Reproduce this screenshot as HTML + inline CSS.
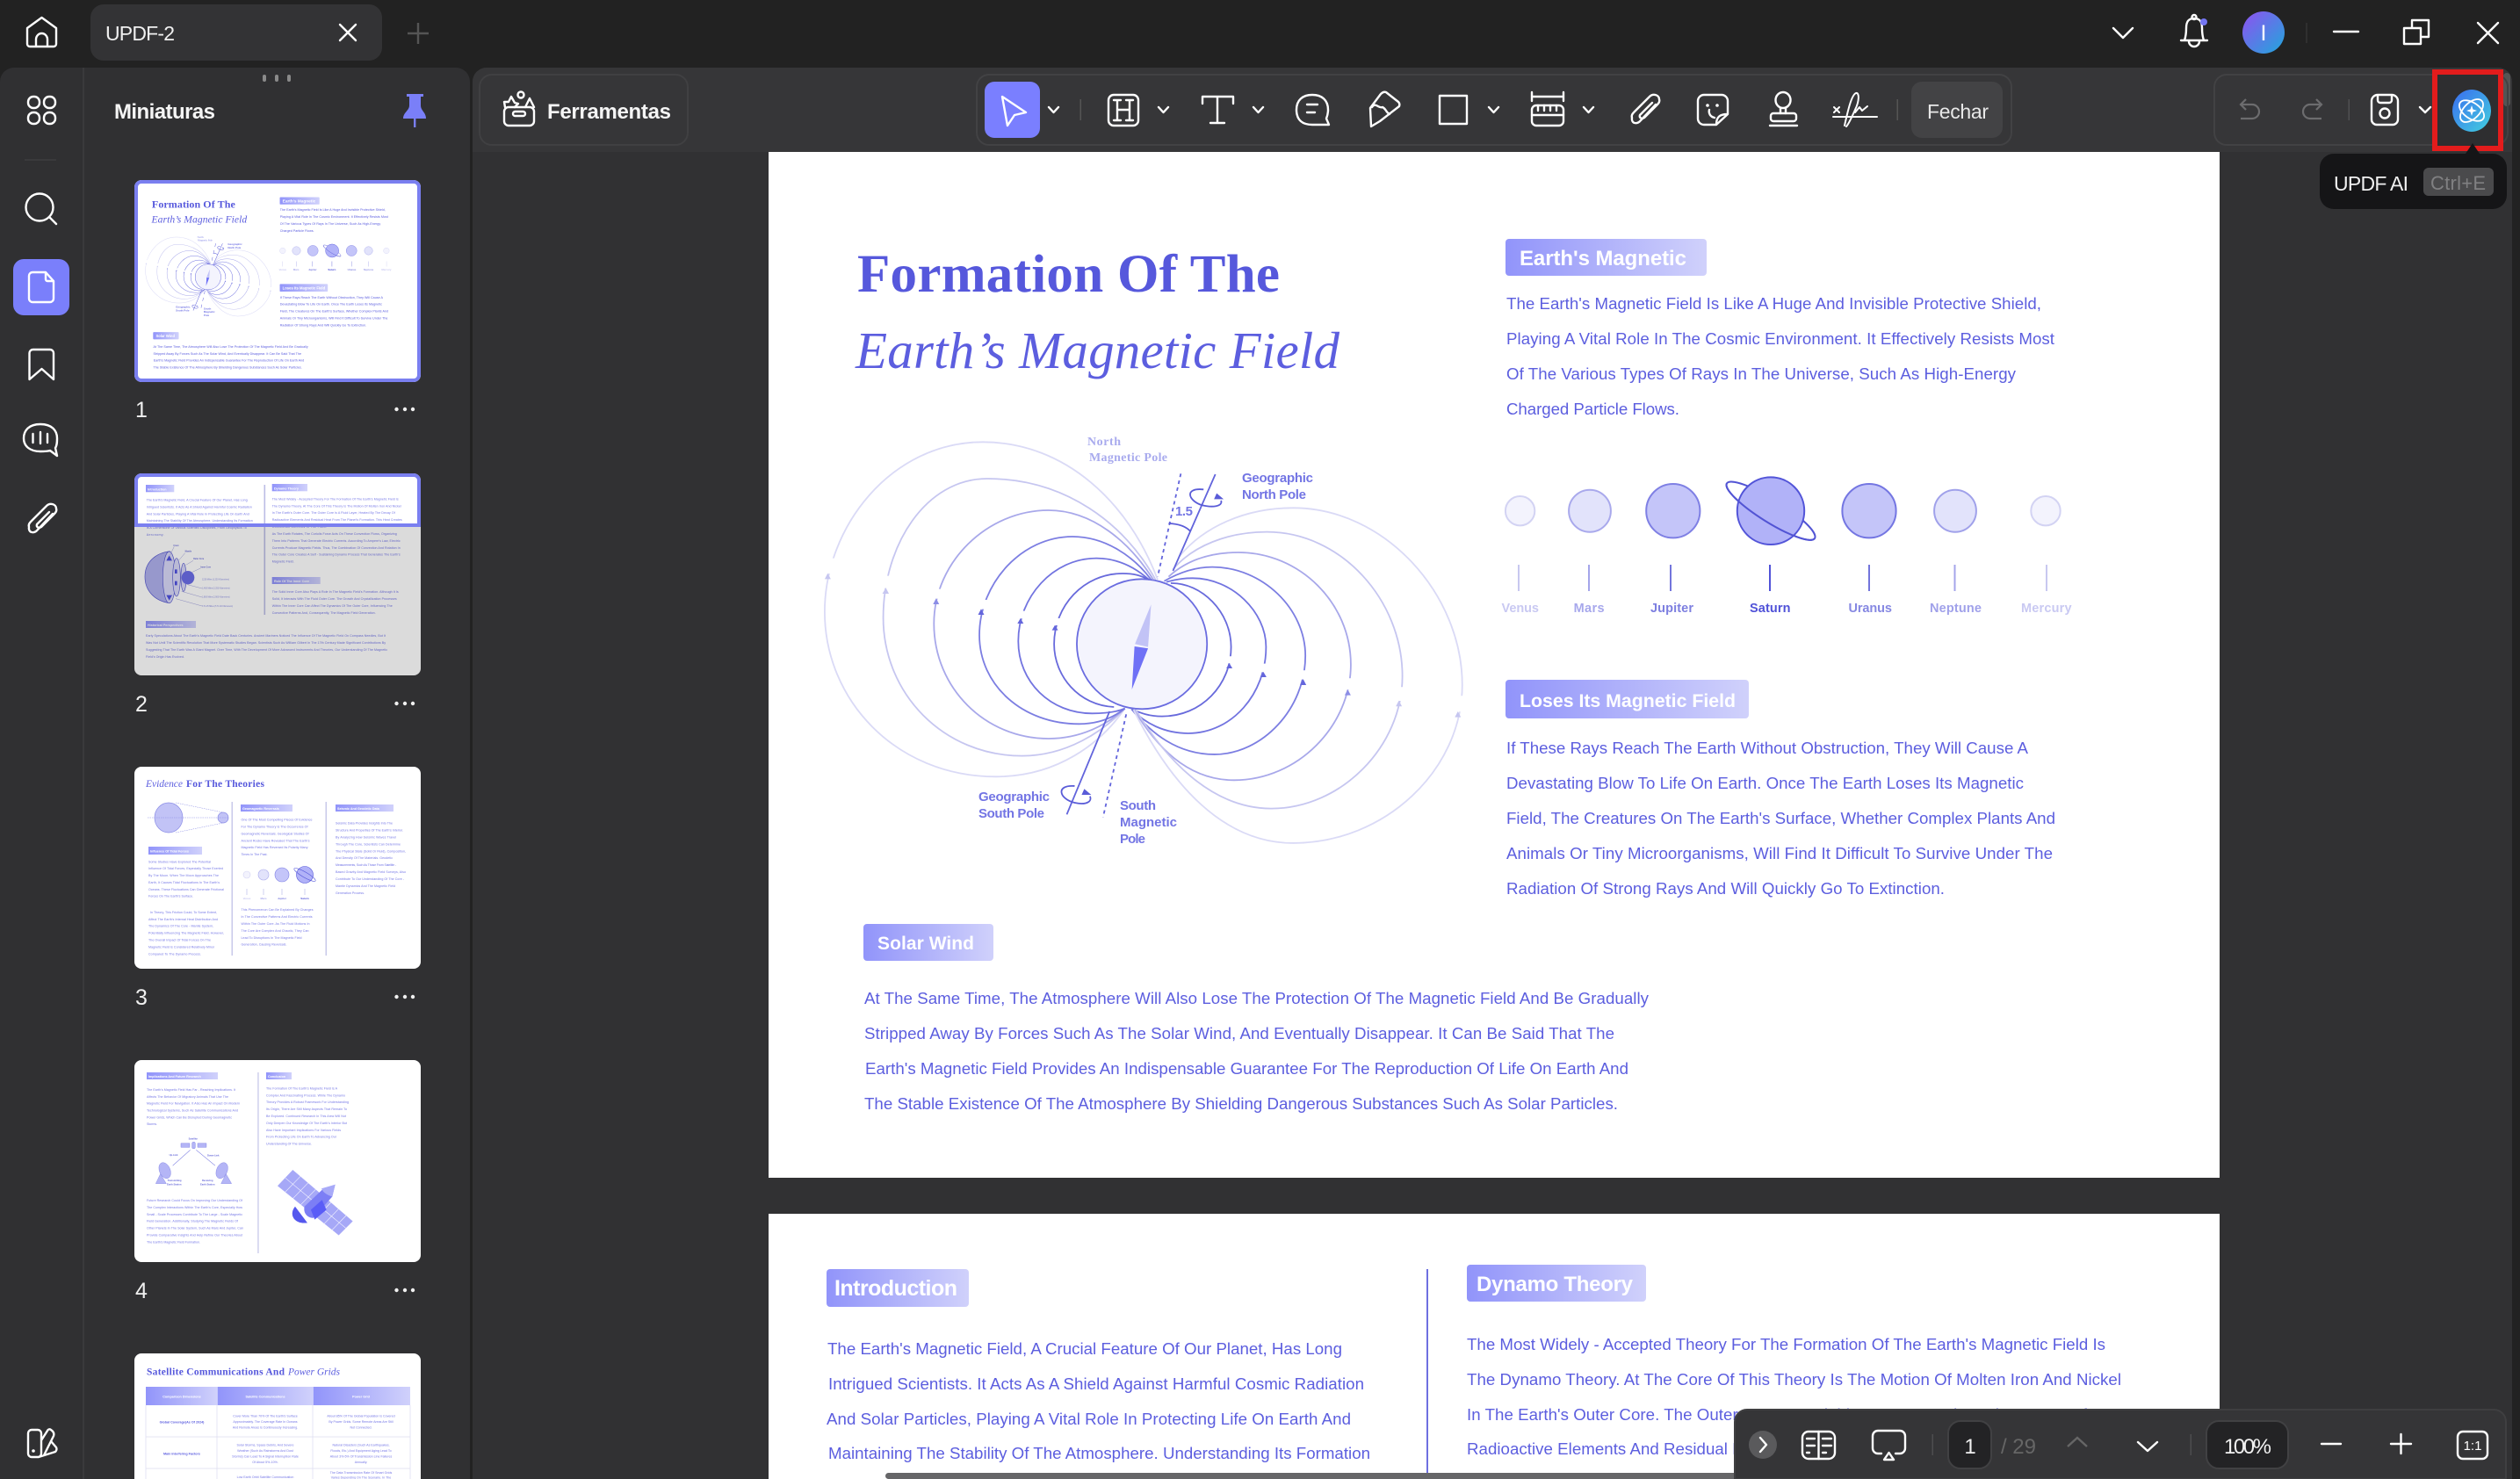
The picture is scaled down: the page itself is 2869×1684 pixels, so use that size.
<!DOCTYPE html>
<html lang="pt"><head><meta charset="utf-8"><title>UPDF-2</title>
<style>
html,body{margin:0;padding:0;background:#222;width:2869px;height:1684px;overflow:hidden}
svg{display:block}
text{font-family:"Liberation Sans",sans-serif}
.ui{fill:#f0f0f0}
.s{stroke:#fff;stroke-width:2.4;fill:none;stroke-linecap:round;stroke-linejoin:round}
.b{font-size:18.7px;fill:#5c5edf}
.pt{fill:#fff;font-weight:700}
.ser{font-family:"Liberation Serif",serif}
.l{font-weight:700;font-size:15px;fill:#7375e4}
.pn{font-weight:700;font-size:14.5px}
.t{font-size:3.6px;fill:#7577e6}
.th{font-size:3.7px;font-weight:700;fill:#fff}
.tb{font-size:3.7px;font-weight:700;fill:#5c5edf}
#dgm path,#dgm ellipse{vector-effect:non-scaling-stroke}
</style></head><body>
<svg width="2869" height="1684" viewBox="0 0 2869 1684" xmlns="http://www.w3.org/2000/svg">
<defs>
<linearGradient id="pg" x1="0" x2="1" y1="0" y2="0"><stop offset="0" stop-color="#9194fa"/><stop offset="1" stop-color="#d0d1fb"/></linearGradient>
<linearGradient id="av" x1="0" x2="1" y1="0" y2="1"><stop offset="0" stop-color="#9050f0"/><stop offset="1" stop-color="#1fa8dc"/></linearGradient>
<linearGradient id="ai" x1="0" x2="1" y1="0" y2="1"><stop offset="0" stop-color="#3b6cf0"/><stop offset="1" stop-color="#41d0de"/></linearGradient>
<clipPath id="c1"><rect x="153" y="205" width="326" height="230" rx="8"/></clipPath>
<clipPath id="c2"><rect x="153" y="539" width="326" height="230" rx="8"/></clipPath>
</defs>
<rect width="2869" height="1684" fill="#222"/>

<!-- left panel -->
<path d="M0,93a16,16 0 0 1 16,-16H519a16,16 0 0 1 16,16V1684H0Z" fill="#303032"/>
<rect x="94" y="77" width="2" height="1607" fill="#3a3a3c"/>
<!-- main panel -->
<path d="M538,93a16,16 0 0 1 16,-16H2844a16,16 0 0 1 16,16V1684H538Z" fill="#313133"/>
<path d="M538,93a16,16 0 0 1 16,-16H2844a16,16 0 0 1 16,16V173H538Z" fill="#363638"/>
<rect x="2850" y="83" width="8" height="38" rx="4" fill="#555"/>

<!-- title bar -->
<path class="s" d="M31,32L47.500,20L64,32V50a3,3 0 0 1 -3,3H34a3,3 0 0 1 -3,-3ZM41,53V45a6.500,7 0 0 1 13,0V53"/>
<rect x="103" y="5" width="332" height="64" rx="15" fill="#333335"/>
<text x="120" y="46" class="ui" font-size="23" textLength="79">UPDF-2</text>
<path class="s" d="M387,28L405,46M405,28L387,46"/>
<path d="M476,26V50M464,38H488" stroke="#555" stroke-width="2.400" fill="none"/>
<path class="s" d="M2406,32L2417,43L2428,32"/>
<path class="s" stroke-width="2" d="M2487,46C2489,40 2489,36 2489,32C2489,24 2492,21 2498,21C2504,21 2507,24 2507,32C2507,36 2507,40 2509,46M2483,46H2513M2492,47a6,6 0 0 0 12,0"/>
<circle class="s" cx="2498" cy="19.500" r="2.500"/>
<circle cx="2509" cy="25" r="4" fill="#7476f2"/>
<ellipse cx="2577" cy="37" rx="24" ry="24" fill="url(#av)"/>
<text x="2573.500" y="46" font-size="25" fill="#fff">I</text>
<rect x="2625.500" y="26" width="1" height="23" fill="#3c3c3c"/>
<path class="s" d="M2657,36H2685"/>
<path class="s" d="M2746,32V23H2765V42H2756M2737,32H2756V50H2737Z"/>
<path class="s" d="M2821,26L2844,49M2844,26L2821,49"/>

<!-- sidebar icons -->
<g class="s"><rect x="32" y="110" width="13" height="13" rx="6"/><rect x="50" y="110" width="13" height="13" rx="6"/><rect x="32" y="128" width="13" height="13" rx="6"/><rect x="50" y="128" width="13" height="13" rx="6"/></g>
<rect x="28" y="181" width="36" height="2" fill="#3a3a3c"/>
<circle class="s" cx="45" cy="236" r="15.500"/><path class="s" d="M56,247L64,255"/>
<rect x="15" y="295" width="64" height="64" rx="12" fill="#7a7ffb"/>
<path class="s" d="M37,310H52L61,320V340a4,4 0 0 1 -4,4H37a4,4 0 0 1 -4,-4V314a4,4 0 0 1 4,-4ZM52,310V318a2,2 0 0 0 2,2H61"/>
<path class="s" d="M33.500,402a4,4 0 0 1 4,-4H57a4,4 0 0 1 4,4V432L47.500,420L33.500,432Z"/>
<path class="s" d="M46,483C33,483 27,490 27,499C27,508 34,514 46,514C50,514 54,514 57,513L65,519L63,510C65,507 65,503 65,499C65,490 59,483 46,483ZM37.500,494V504M46,492V505M54,494V504"/>
<path class="s" id="clip1" d="M60,585L43,603C39,608 32,607 33,600C32,597 34,595 36,593L53,576C57,572 64,574 64,579C65,582 63,584 61,586L47,600C44,602 41,600 42,597L56,583"/>
<path class="s" d="M32,1632a4,4 0 0 1 4,-4h7a4,4 0 0 1 4,4V1655a4,4 0 0 1 -4,4H36a4,4 0 0 1 -4,-4ZM47,1640L54,1629C55,1627 57,1627 58,1628C61,1630 62,1632 61,1635L50,1657M58,1641L64,1648C65,1650 64,1652 63,1653L44,1659"/>
<circle cx="38" cy="1652" r="1.800" fill="#fff"/>

<!-- thumbs header -->
<rect x="299" y="85" width="4" height="8" rx="2" fill="#8a8a8a"/><rect x="313" y="85" width="4" height="8" rx="2" fill="#8a8a8a"/><rect x="327" y="85" width="4" height="8" rx="2" fill="#8a8a8a"/>
<text x="130" y="135" font-size="24" font-weight="700" fill="#f5f5f5" textLength="115">Miniaturas</text>
<path d="M463,107H482V110H479V120C479,126 485,128 485,135H459C459,128 466,126 466,120V110H463Z" fill="#7a7ff8"/><rect x="471" y="135" width="2.400" height="10" fill="#7a7ff8"/>

<!-- Ferramentas -->
<rect x="546" y="85" width="237" height="80" rx="14" fill="none" stroke="#404042" stroke-width="2"/>
<g class="s"><rect x="574" y="122" width="34" height="21" rx="5"/><rect x="584" y="127" width="14" height="5" rx="2.500"/><circle cx="593" cy="108" r="3.500"/><path d="M598,122L603,112L608,122M575,122L574,116L579,116L582,110L586,117L590,118L586,122"/></g>
<text x="623" y="135" font-size="24" font-weight="700" fill="#f5f5f5" textLength="141">Ferramentas</text>

<!-- PAGE 1 -->
<rect x="875" y="173" width="1652" height="1168" fill="#fff"/>
<text x="976" y="332" class="ser" font-size="61" font-weight="700" fill="#5658dc" textLength="481">Formation Of The</text>
<text x="974" y="419" class="ser" font-size="59" font-style="italic" fill="#5c5edf" textLength="551">Earth’s Magnetic Field</text>

<g stroke-width="1.800"><g id="dgm" transform="translate(920 470) scale(.4975 .3333)" fill="none">
<ellipse cx="764" cy="790" rx="149" ry="222" fill="#f4f4fd" stroke="#6a6ce0"/>
<path stroke="#dadaf6" d="M800,570C735,310 590,100 400,100C190,100 38,390 38,680C38,980 200,1243 430,1243C570,1243 670,1130 725,1010"/>
<path stroke="#c6c6f0" d="M795,570C725,380 590,225 410,225C270,225 172,450 172,700C172,960 310,1172 490,1172C590,1172 675,1090 725,1010"/>
<path stroke="#a8a8ea" d="M790,570C735,440 650,333 550,333C410,333 288,510 288,720C288,940 405,1113 550,1113C625,1113 685,1065 725,1010"/>
<path stroke="#7c7ee2" d="M785,570C745,490 680,423 605,423C490,423 392,580 392,760C392,930 490,1063 620,1063C665,1063 700,1040 725,1010"/>
<path stroke="#7274e0" d="M780,570C750,530 710,497 660,497C560,497 481,630 481,780C481,920 555,1027 650,1027C685,1027 710,1020 725,1010"/>
<path stroke="#686adc" d="M780,570C760,555 745,549 720,549C630,549 563,660 563,790C563,900 620,1000 700,1005"/>
<path stroke="#686adc" d="M830,582C900,580 968,680 968,800C968,930 900,1037 810,1037C780,1037 760,1025 740,1012"/>
<path stroke="#7274e0" d="M820,578C850,566 865,565 880,565C970,565 1048,680 1048,800C1048,960 970,1095 870,1095C815,1095 770,1060 740,1012"/>
<path stroke="#7c7ee2" d="M815,575C850,545 885,527 925,527C1040,527 1138,670 1138,830C1138,1010 1040,1167 930,1167C845,1167 785,1095 740,1012"/>
<path stroke="#a8a8ea" d="M825,560C865,505 920,477 985,477C1125,477 1242,650 1242,860C1242,1070 1120,1255 975,1255C865,1255 795,1135 745,1012"/>
<path stroke="#c6c6f0" d="M835,535C880,455 960,407 1050,407C1220,407 1360,640 1360,900C1360,1140 1220,1352 1060,1352C920,1352 815,1175 750,1015"/>
<path stroke="#dadaf6" d="M850,490C905,390 1000,325 1110,325C1320,325 1497,620 1497,930C1497,1220 1320,1470 1110,1470C950,1470 830,1270 745,1015"/>
<!-- gaps in the field lines, just before each arrowhead -->
<path fill="#fff" stroke="none" d="M30,497h40v52h-40zM160,557h40v42h-40zM280,602h40v33h-40zM385,639h40v32h-40zM475,677h40v26h-40zM555,702h30v24h-30zM950,832h30v24h-30zM1030,857h30v29h-30zM1120,880h30v31h-30zM1220,907h35v39h-35zM1340,937h35v47h-35zM1475,967h35v54h-35z"/>
<g stroke="none"><path fill="#c6c6f0" d="M45,548l-7,20h14zM178,598l-8,20h15zM1487,1020l-7,20h14zM1352,983l-7,20h14z"/><path fill="#8c8ee6" d="M293,634l-7,20h14zM1235,945l-7,20h14z"/><path fill="#6466dc" d="M396,670l-7,20h14zM486,702l-7,18h14zM565,725l-7,18h14zM964,855l-7,18h14zM1042,885l-7,18h14zM1133,910l-7,20h14z"/>
<path fill="#c2c3f6" d="M785,655L748,790L778,800Z"/><path fill="#6f71f6" d="M747,798L778,805L741,945Z"/></g>
<path stroke="#6264dc" d="M932,210L835,540M690,1020L592,1372"/>
<path stroke="#6264dc" stroke-dasharray="4 4" d="M853,208L800,560M728,1030L675,1382"/>
<path stroke="#5a5cd8" d="M825,378Q860,380 875,405"/>
<path stroke="#5a5cd8" d="M905,262C860,255 870,300 900,315C925,325 950,320 945,300M610,1275C565,1270 575,1320 610,1332C640,1342 650,1325 645,1310"/>
<path fill="#5a5cd8" stroke="none" d="M935,275l16,20l-22,0zM632,1285l16,20l-22,0z"/>
</g></g>
<text x="1238" y="507" class="ser" font-size="14" font-weight="700" fill="#a9abee" textLength="38">North</text>
<text x="1240" y="525" class="ser" font-size="14" font-weight="700" fill="#a9abee" textLength="89">Magnetic Pole</text>
<text x="1414" y="549" class="l" textLength="81">Geographic</text>
<text x="1414" y="568" class="l" textLength="73">North Pole</text>
<text x="1338" y="587" class="l" font-size="17" textLength="20">1.5</text>
<text x="1114" y="912" class="l" textLength="81">Geographic</text>
<text x="1114" y="931" class="l" textLength="75">South Pole</text>
<text x="1275" y="922" class="l" textLength="41">South</text>
<text x="1275" y="941" class="l" textLength="65">Magnetic</text>
<text x="1275" y="960" class="l" textLength="29">Pole</text>

<rect x="1714" y="272" width="229" height="42" rx="4" fill="url(#pg)"/>
<text x="1730" y="302" class="pt" font-size="24" textLength="190">Earth's Magnetic</text>
<text x="1715" y="352" class="b" textLength="609">The Earth's Magnetic Field Is Like A Huge And Invisible Protective Shield,</text>
<text x="1715" y="392" class="b" textLength="624">Playing A Vital Role In The Cosmic Environment. It Effectively Resists Most</text>
<text x="1715" y="432" class="b" textLength="580">Of The Various Types Of Rays In The Universe, Such As High-Energy</text>
<text x="1715" y="472" class="b" textLength="197">Charged Particle Flows.</text>

<g id="pl" stroke-width="2">
<ellipse cx="2016" cy="581.700" rx="59" ry="13" transform="rotate(32 2016 581.700)" fill="none" stroke="#5254d4"/>
<ellipse cx="1730.600" cy="581.700" rx="16.700" ry="16.700" fill="#f3f3fd" stroke="#d3d3f3"/>
<ellipse cx="1810" cy="581.700" rx="23.900" ry="24" fill="#e2e3fb" stroke="#a9a9ec"/>
<ellipse cx="1904.800" cy="581.700" rx="30.600" ry="30.700" fill="#c4c5f9" stroke="#7f80e4"/>
<ellipse cx="2016" cy="581.700" rx="38.200" ry="38.300" fill="#b1b2f8" stroke="#5254d8"/>
<path d="M-59,0A59,13 0 0 0 59,0" transform="translate(2016 581.700) rotate(32)" fill="none" stroke="#5254d4"/>
<ellipse cx="2128" cy="581.700" rx="30.600" ry="30.700" fill="#c4c5f9" stroke="#7476e2"/>
<ellipse cx="2226" cy="581.700" rx="23.900" ry="24" fill="#e2e3fb" stroke="#a0a1ea"/>
<ellipse cx="2329" cy="581.700" rx="16.700" ry="16.700" fill="#f3f3fd" stroke="#d3d3f3"/>
<path stroke="#c8c8f0" d="M1729,643V673M2330,643V673"/><path stroke="#a4a5ea" d="M1809,643V673M2225.500,643V673"/><path stroke="#7375dc" d="M1902,643V673M2128,643V673"/><path stroke="#5052d8" d="M2015,643V673"/>
</g>
<text x="1709.500" y="697" class="pn" fill="#c9c9f2" textLength="42.500">Venus</text>
<text x="1791.600" y="697" class="pn" fill="#a7a8ec" textLength="35">Mars</text>
<text x="1879" y="697" class="pn" fill="#7d7fe0" textLength="49">Jupiter</text>
<text x="1992" y="697" class="pn" fill="#5052d8" textLength="46.500">Saturn</text>
<text x="2104.500" y="697" class="pn" fill="#8688e2" textLength="49.500">Uranus</text>
<text x="2197" y="697" class="pn" fill="#a0a1ea" textLength="59">Neptune</text>
<text x="2301" y="697" class="pn" fill="#c9c9f2" textLength="57.600">Mercury</text>

<rect x="1714" y="774" width="277" height="44" rx="4" fill="url(#pg)"/>
<text x="1730" y="805" class="pt" font-size="21.300" textLength="246">Loses Its Magnetic Field</text>
<text x="1715" y="858" class="b" textLength="594">If These Rays Reach The Earth Without Obstruction, They Will Cause A</text>
<text x="1715" y="898" class="b" textLength="589">Devastating Blow To Life On Earth. Once The Earth Loses Its Magnetic</text>
<text x="1715" y="938" class="b" textLength="625">Field, The Creatures On The Earth's Surface, Whether Complex Plants And</text>
<text x="1715" y="978" class="b" textLength="622">Animals Or Tiny Microorganisms, Will Find It Difficult To Survive Under The</text>
<text x="1715" y="1018" class="b" textLength="499">Radiation Of Strong Rays And Will Quickly Go To Extinction.</text>

<rect x="983" y="1052" width="148" height="42" rx="4" fill="url(#pg)"/>
<text x="999" y="1081" class="pt" font-size="21" textLength="110">Solar Wind</text>
<text x="984" y="1143" class="b" textLength="893">At The Same Time, The Atmosphere Will Also Lose The Protection Of The Magnetic Field And Be Gradually</text>
<text x="984" y="1183" class="b" textLength="854">Stripped Away By Forces Such As The Solar Wind, And Eventually Disappear. It Can Be Said That The</text>
<text x="985" y="1223" class="b" textLength="869">Earth's Magnetic Field Provides An Indispensable Guarantee For The Reproduction Of Life On Earth And</text>
<text x="984" y="1263" class="b" textLength="858">The Stable Existence Of The Atmosphere By Shielding Dangerous Substances Such As Solar Particles.</text>

<!-- PAGE 2 -->
<rect x="875" y="1382" width="1652" height="302" fill="#fff"/>
<rect x="941" y="1445" width="162" height="43" rx="4" fill="url(#pg)"/>
<text x="950" y="1475" class="pt" font-size="25" textLength="140">Introduction</text>
<rect x="1624" y="1445" width="2" height="240" fill="#6e70e0"/>
<rect x="1670" y="1440" width="204" height="42" rx="4" fill="url(#pg)"/>
<text x="1681" y="1470" class="pt" font-size="24" textLength="178">Dynamo Theory</text>
<text x="942" y="1542" class="b" textLength="586">The Earth's Magnetic Field, A Crucial Feature Of Our Planet, Has Long</text>
<text x="943" y="1582" class="b" textLength="610">Intrigued Scientists. It Acts As A Shield Against Harmful Cosmic Radiation</text>
<text x="941" y="1622" class="b" textLength="597">And Solar Particles, Playing A Vital Role In Protecting Life On Earth And</text>
<text x="943" y="1661" class="b" textLength="617">Maintaining The Stability Of The Atmosphere. Understanding Its Formation</text>
<text x="1670" y="1537" class="b" textLength="727">The Most Widely - Accepted Theory For The Formation Of The Earth's Magnetic Field Is</text>
<text x="1670" y="1577" class="b" textLength="745">The Dynamo Theory. At The Core Of This Theory Is The Motion Of Molten Iron And Nickel</text>
<text x="1670" y="1617" class="b" textLength="706">In The Earth's Outer Core. The Outer Core Is A Fluid Layer, Heated By The Decay Of</text>
<text x="1670" y="1656" class="b" textLength="750">Radioactive Elements And Residual Heat From The Planet's Formation. This Heat Creates</text>
<rect x="1008" y="1677" width="1100" height="7" rx="3.500" fill="#666668"/>

<!-- toolbar -->
<rect x="1112" y="85" width="1178" height="80" rx="14" fill="none" stroke="#424244" stroke-width="2"/>
<rect x="1121" y="93" width="63" height="64" rx="11" fill="#7a7fff"/>
<path class="s" d="M1141,110L1168,128L1155,131L1147,143Z"/>
<g class="s" stroke-width="2">
<path d="M1194,122l5.500,6l5.500,-6M1319,122l5.500,6l5.500,-6M1427,122l5.500,6l5.500,-6M1695,122l5.500,6l5.500,-6M1803,122l5.500,6l5.500,-6"/>
</g>
<rect x="1229.500" y="113" width="1.500" height="24" fill="#555"/>
<g class="s">
<rect x="1262" y="108" width="34" height="35" rx="6"/>
<path d="M1272,114V137M1286,114V137M1268,114H1276M1282,114H1290M1268,137H1276M1282,137H1290M1272,125H1286"/>
<path d="M1369,118V110H1404V118M1386,110V140M1378,140H1394"/>
<path d="M1494,108C1483,108 1476,114 1476,125C1476,137 1483,142 1494,142H1513L1510,135C1512,130 1512,127 1512,125C1512,114 1505,108 1494,108ZM1488,119H1500M1488,128H1497"/>
<path d="M1572,107Q1575,104 1578,105L1592,116Q1594,118 1593,121L1571,138L1561,144L1560,123ZM1562,122C1566,116 1570,124 1574,122C1578,124 1578,128 1582,130"/>
<rect x="1639" y="109" width="31" height="32"/>
<path d="M1744,105V115M1780,105V115M1744,110H1780M1744,131H1780M1751,120v6M1758,120v6M1765,120v6M1772,120v6"/>
<rect x="1744" y="120" width="36" height="23" rx="5"/>
<path transform="translate(1825 -466)" d="M60,585L43,603C39,608 32,607 33,600C32,597 34,595 36,593L53,576C57,572 64,574 64,579C65,582 63,584 61,586L47,600C44,602 41,600 42,597L56,583"/>
<path d="M1940,108H1960a7,7 0 0 1 7,7V130L1954,142H1940a7,7 0 0 1 -7,-7V115a7,7 0 0 1 7,-7ZM1954,142C1954,133 1958,130 1967,130M1946,125C1945,129 1947,133 1952,134"/>
<ellipse cx="2030" cy="114" rx="8.500" ry="9"/>
<path d="M2027,123V129M2033,123V129M2015,143H2046"/>
<rect x="2016" y="129" width="29" height="9" rx="3"/>
<path stroke-width="2" d="M2087,133H2137M2100,143C2104,125 2108,108 2113,106C2117,105 2117,115 2112,125C2108,134 2104,142 2102,144M2112,128L2117,122L2120,126L2126,121M2088,122L2094,128M2094,122L2088,128"/>
</g>
<circle cx="1944" cy="120" r="1.800" fill="#fff"/><circle cx="1955" cy="120" r="1.800" fill="#fff"/>
<rect x="2159.500" y="113" width="1.500" height="24" fill="#555"/>
<rect x="2176" y="93" width="104" height="64" rx="12" fill="#434345"/>
<text x="2194" y="135" font-size="23" fill="#e8e8e8" textLength="70">Fechar</text>

<!-- right group -->
<rect x="2521" y="85" width="334" height="80" rx="14" fill="none" stroke="#424244" stroke-width="2"/>
<path d="M2557,113L2551,119L2557,125M2551,119H2564a8,8 0 0 1 0,16H2551M2637,113L2643,119L2637,125M2643,119H2630a8,8 0 0 0 0,16H2643" fill="none" stroke="#6c6c6e" stroke-width="2.200"/>
<rect x="2673.500" y="113" width="1.500" height="24" fill="#505052"/>
<path class="s" d="M2707,108H2723a7,7 0 0 1 7,7V136a6,6 0 0 1 -6,6H2706a6,6 0 0 1 -6,-6V115a7,7 0 0 1 7,-7ZM2707,108V114a3,3 0 0 0 3,3H2720a3,3 0 0 0 3,-3V108"/>
<circle class="s" cx="2715" cy="129" r="5.500"/>
<path class="s" d="M2755,122l6,6l6,-6"/>
<rect x="2772" y="82" width="75" height="87" fill="#2e2e30"/>
<rect x="2772" y="82" width="75" height="87" fill="none" stroke="#e31c1c" stroke-width="6"/>
<ellipse cx="2814" cy="126" rx="22" ry="24" fill="url(#ai)"/>
<g fill="none" stroke="#fff" stroke-width="1.800"><ellipse cx="2814" cy="126" rx="16" ry="9" transform="rotate(35 2814 126)"/><ellipse cx="2814" cy="126" rx="16" ry="9" transform="rotate(-45 2814 126)"/></g>
<path d="M2814,120l1.500,4.500l4.500,1.500l-4.500,1.500l-1.500,4.500l-1.500,-4.500l-4.500,-1.500l4.500,-1.500z" fill="#fff"/>
<path d="M2807,175L2815,163L2823,175Z" fill="#151517"/>
<rect x="2641" y="175" width="213" height="63" rx="16" fill="#151517"/>
<text x="2657" y="217" font-size="23" fill="#f0f0f0" textLength="85">UPDF AI</text>
<rect x="2759" y="191" width="80" height="32" rx="6" fill="#4a4a4c"/>
<text x="2767" y="216" font-size="22" fill="#808082" textLength="63">Ctrl+E</text>

<!-- thumbnail 1 -->
<g clip-path="url(#c1)"><rect x="153" y="205" width="326" height="230" fill="#fff"/>
<g transform="translate(153 205) scale(.1973 .1969) translate(-875 -173)">
<text x="976" y="332" class="ser" font-size="61" font-weight="700" fill="#5658dc" textLength="481">Formation Of The</text>
<text x="974" y="419" class="ser" font-size="59" font-style="italic" fill="#5c5edf" textLength="551">Earth’s Magnetic Field</text>
<g stroke-width=".5"><use href="#dgm"/></g>
<use href="#pl"/>
<text x="1238" y="507" class="ser" font-size="14" font-weight="700" fill="#a9abee">North</text><text x="1240" y="525" class="ser" font-size="14" font-weight="700" fill="#a9abee">Magnetic Pole</text>
<text x="1414" y="549" class="l">Geographic</text><text x="1414" y="568" class="l">North Pole</text>
<text x="1114" y="912" class="l">Geographic</text><text x="1114" y="931" class="l">South Pole</text>
<text x="1275" y="922" class="l">South</text><text x="1275" y="941" class="l">Magnetic</text><text x="1275" y="960" class="l">Pole</text>
<rect x="1714" y="272" width="229" height="42" rx="4" fill="url(#pg)"/><text x="1730" y="302" class="pt" font-size="24">Earth's Magnetic</text>
<text x="1715" y="352" class="b" textLength="609">The Earth's Magnetic Field Is Like A Huge And Invisible Protective Shield,</text>
<text x="1715" y="392" class="b" textLength="624">Playing A Vital Role In The Cosmic Environment. It Effectively Resists Most</text>
<text x="1715" y="432" class="b" textLength="580">Of The Various Types Of Rays In The Universe, Such As High-Energy</text>
<text x="1715" y="472" class="b" textLength="197">Charged Particle Flows.</text>
<text x="1709.500" y="697" class="pn" fill="#c9c9f2">Venus</text><text x="1791.600" y="697" class="pn" fill="#a7a8ec">Mars</text><text x="1879" y="697" class="pn" fill="#7d7fe0">Jupiter</text><text x="1992" y="697" class="pn" fill="#5052d8">Saturn</text><text x="2104.500" y="697" class="pn" fill="#8688e2">Uranus</text><text x="2197" y="697" class="pn" fill="#a0a1ea">Neptune</text><text x="2301" y="697" class="pn" fill="#c9c9f2">Mercury</text>
<rect x="1714" y="774" width="277" height="44" rx="4" fill="url(#pg)"/><text x="1730" y="805" class="pt" font-size="21.300">Loses Its Magnetic Field</text>
<text x="1715" y="858" class="b" textLength="594">If These Rays Reach The Earth Without Obstruction, They Will Cause A</text>
<text x="1715" y="898" class="b" textLength="589">Devastating Blow To Life On Earth. Once The Earth Loses Its Magnetic</text>
<text x="1715" y="938" class="b" textLength="625">Field, The Creatures On The Earth's Surface, Whether Complex Plants And</text>
<text x="1715" y="978" class="b" textLength="622">Animals Or Tiny Microorganisms, Will Find It Difficult To Survive Under The</text>
<text x="1715" y="1018" class="b" textLength="499">Radiation Of Strong Rays And Will Quickly Go To Extinction.</text>
<rect x="983" y="1052" width="148" height="42" rx="4" fill="url(#pg)"/><text x="999" y="1081" class="pt" font-size="21">Solar Wind</text>
<text x="984" y="1143" class="b" textLength="893">At The Same Time, The Atmosphere Will Also Lose The Protection Of The Magnetic Field And Be Gradually</text>
<text x="984" y="1183" class="b" textLength="854">Stripped Away By Forces Such As The Solar Wind, And Eventually Disappear. It Can Be Said That The</text>
<text x="985" y="1223" class="b" textLength="869">Earth's Magnetic Field Provides An Indispensable Guarantee For The Reproduction Of Life On Earth And</text>
<text x="984" y="1263" class="b" textLength="858">The Stable Existence Of The Atmosphere By Shielding Dangerous Substances Such As Solar Particles.</text>
</g></g>
<rect x="155" y="207" width="322" height="226" rx="6" fill="none" stroke="#7a7ff0" stroke-width="4"/>
<text x="154" y="475" font-size="25" class="ui">1</text>
<g fill="#f0f0f0"><circle cx="451.500" cy="466" r="2.200"/><circle cx="461" cy="466" r="2.200"/><circle cx="470" cy="466" r="2.200"/></g>

<!-- thumbnail 2 -->
<g clip-path="url(#c2)"><rect x="153" y="539" width="326" height="230" fill="#fff"/>
<rect x="166" y="552" width="32.300" height="8.300" fill="url(#pg)"/><text x="168" y="558.500" class="th">Introduction</text>
<rect x="309.700" y="551" width="40.300" height="8.300" fill="url(#pg)"/><text x="312" y="557.500" class="th">Dynamo Theory</text>
<rect x="300.500" y="552" width="1.600" height="148" fill="#bcbde6"/>
<text x="166.700" y="570.500" class="t" textLength="115">The Earth's Magnetic Field, A Crucial Feature Of Our Planet, Has Long</text>
<text x="166.700" y="578.500" class="t" textLength="120">Intrigued Scientists. It Acts As A Shield Against Harmful Cosmic Radiation</text>
<text x="166.700" y="586.500" class="t" textLength="117">And Solar Particles, Playing A Vital Role In Protecting Life On Earth And</text>
<text x="166.700" y="594.200" class="t" textLength="121">Maintaining The Stability Of The Atmosphere. Understanding Its Formation</text>
<text x="166.700" y="602.200" class="t" textLength="114">Is A Cornerstone Of Various Scientific Disciplines, From Geophysics To</text>
<text x="166.700" y="609.900" class="t" textLength="20">Aeronomy.</text>
<text x="309.700" y="569.500" class="t" textLength="144">The Most Widely - Accepted Theory For The Formation Of The Earth's Magnetic Field Is</text>
<text x="309.700" y="577.500" class="t" textLength="147">The Dynamo Theory. At The Core Of This Theory Is The Motion Of Molten Iron And Nickel</text>
<text x="309.700" y="585.200" class="t" textLength="140">In The Earth's Outer Core. The Outer Core Is A Fluid Layer, Heated By The Decay Of</text>
<text x="309.700" y="593.200" class="t" textLength="148">Radioactive Elements And Residual Heat From The Planet's Formation. This Heat Creates</text>
<text x="309.700" y="600.900" class="t" textLength="62">Convection Currents In The Fluid.</text>
<text x="309.700" y="608.900" class="t" textLength="142">As The Earth Rotates, The Coriolis Force Acts On These Convection Flows, Organizing</text>
<text x="309.700" y="616.900" class="t" textLength="146">Them Into Patterns That Generate Electric Currents. According To Ampere's Law, Electric</text>
<text x="309.700" y="624.900" class="t" textLength="146">Currents Produce Magnetic Fields. Thus, The Combination Of Convection And Rotation In</text>
<text x="309.700" y="632.500" class="t" textLength="146">The Outer Core Creates A Self - Sustaining Dynamo Process That Generates The Earth's</text>
<text x="309.700" y="640.500" class="t" textLength="25">Magnetic Field.</text>
<rect x="309.700" y="657" width="55" height="8" fill="url(#pg)"/><text x="312" y="663" class="th">Role Of The Inner Core</text>
<text x="309.700" y="675.200" class="t" textLength="144">The Solid Inner Core Also Plays A Role In The Magnetic Field's Formation. Although It Is</text>
<text x="309.700" y="683.200" class="t" textLength="142">Solid, It Interacts With The Fluid Outer Core. The Growth And Crystallization Processes</text>
<text x="309.700" y="691.200" class="t" textLength="137">Within The Inner Core Can Affect The Dynamics Of The Outer Core, Influencing The</text>
<text x="309.700" y="699.200" class="t" textLength="118">Convective Patterns And, Consequently, The Magnetic Field Generation.</text>
<rect x="166" y="707" width="57" height="8" fill="url(#pg)"/><text x="168" y="713" class="th">Historical Perspectives</text>
<text x="166" y="725.200" class="t" textLength="273">Early Speculations About The Earth's Magnetic Field Date Back Centuries. Ancient Mariners Noticed The Influence Of The Magnetic Field On Compass Needles, But It</text>
<text x="166" y="733.200" class="t" textLength="273">Was Not Until The Scientific Revolution That More Systematic Studies Began. Scientists Such As William Gilbert In The 17th Century Made Significant Contributions By</text>
<text x="166" y="740.900" class="t" textLength="275">Suggesting That The Earth Was A Giant Magnet. Over Time, With The Development Of More Advanced Instruments And Theories, Our Understanding Of The Magnetic</text>
<text x="166" y="748.900" class="t" textLength="44">Field's Origin Has Evolved.</text>
<g transform="translate(150 535) scale(.3333)">
<path d="M130,278C75,285 45,320 45,365C45,410 75,448 130,455Z" fill="#b0b2ee" stroke="#5557d0" stroke-width="2"/>
<ellipse cx="128" cy="367" rx="22" ry="88" fill="#d9d9f9" stroke="#5557d0" stroke-width="2"/>
<ellipse cx="153" cy="367" rx="13" ry="65" fill="#d9d9f9" stroke="#5557d0" stroke-width="2"/>
<ellipse cx="177" cy="367" rx="9" ry="48" fill="#d9d9f9" stroke="#5557d0" stroke-width="2"/>
<path d="M118,310L128,292L138,310ZM118,428L128,446L138,428ZM147,340h8v14h-8zM147,380h8v14h-8z" fill="#4f51e0"/>
<ellipse cx="192" cy="368" rx="22" ry="23" fill="#6c6ee8"/>
<path d="M130,292L145,262M160,310L182,284M185,325L210,310M205,350L235,336M190,392L240,405M170,415L240,435M150,440L240,465" stroke="#a0a1dc" stroke-width="1.500" fill="none"/>
<g font-size="7" fill="#6466d8" font-weight="700"><text x="142" y="261">Crust</text><text x="182" y="280">Mantle</text><text x="210" y="306">Outer Core</text><text x="235" y="335">Inner Core</text></g>
<g font-size="7" fill="#8688e2"><text x="240" y="376">1220 Miles (1,220 Kilometers)</text><text x="240" y="407">1,400 Miles (2,253 Kilometers)</text><text x="240" y="437">1,800 Miles (2,900 Kilometers)</text><text x="240" y="468">3 To 25 Miles (5 To 40 Kilometers)</text></g>
</g>
<rect x="153" y="598" width="326" height="171" fill="#000" opacity=".14"/>
</g>
<path d="M155,598V547a6,6 0 0 1 6,-6H471a6,6 0 0 1 6,6V598Z" fill="none" stroke="#7a7ff0" stroke-width="4"/>
<text x="154" y="810" font-size="25" class="ui">2</text>
<g fill="#f0f0f0"><circle cx="451.500" cy="801" r="2.200"/><circle cx="461" cy="801" r="2.200"/><circle cx="470" cy="801" r="2.200"/></g>

<!-- thumbnail 3 -->
<rect x="153" y="873" width="326" height="230" rx="8" fill="#fff"/>
<text x="166" y="896" class="ser" font-size="11.500" font-style="italic" fill="#5c5edf" textLength="42">Evidence</text>
<text x="212" y="896" class="ser" font-size="11.500" font-weight="700" fill="#5658dc" textLength="89">For The Theories</text>
<rect x="263.500" y="913" width="1.500" height="175" fill="#c8c9ea"/><rect x="370.500" y="913" width="1.500" height="175" fill="#c8c9ea"/>
<ellipse cx="192" cy="931" rx="16" ry="17" fill="#c2c3f6" stroke="#8a8ce6" stroke-width=".7"/><ellipse cx="254" cy="931" rx="6" ry="6" fill="#c2c3f6" stroke="#8a8ce6" stroke-width=".7"/>
<path d="M168,931H260M200,914L254,925M200,948L254,937" stroke="#8a8ce6" stroke-width=".5" stroke-dasharray="1.500 1" fill="none"/>
<rect x="169" y="964" width="61" height="9" fill="url(#pg)"/><text x="171" y="970.500" class="th">Influence Of Tidal Forces</text>
<text x="169" y="982.600" class="t" textLength="71">Some Studies Have Explored The Potential</text>
<text x="169" y="990.100" class="t" textLength="85">Influence Of Tidal Forces, Especially Those Exerted</text>
<text x="169" y="998" class="t" textLength="80">By The Moon. When The Moon Approaches The</text>
<text x="169" y="1005.900" class="t" textLength="81">Earth, It Causes Tidal Fluctuations In The Earth's</text>
<text x="169" y="1013.800" class="t" textLength="86">Oceans. These Fluctuations Can Generate Frictional</text>
<text x="169" y="1021.700" class="t" textLength="51">Forces On The Earth's Surface.</text>
<text x="171" y="1039.900" class="t" textLength="76">In Theory, This Friction Could, To Some Extent,</text>
<text x="169" y="1047.800" class="t" textLength="79">Affect The Earth's Internal Heat Distribution And</text>
<text x="169" y="1055.700" class="t" textLength="74">The Dynamics Of The Core - Mantle System,</text>
<text x="169" y="1063.600" class="t" textLength="86">Potentially Influencing The Magnetic Field. However,</text>
<text x="169" y="1071.500" class="t" textLength="71">The Overall Impact Of Tidal Forces On The</text>
<text x="169" y="1079.400" class="t" textLength="75">Magnetic Field Is Considered Relatively Minor</text>
<text x="169" y="1087.400" class="t" textLength="60">Compared To The Dynamo Process.</text>
<rect x="274" y="916" width="59" height="8" fill="url(#pg)"/><text x="276" y="922" class="th">Geomagnetic Reversals</text>
<text x="274.500" y="934.700" class="t" textLength="81">One Of The Most Compelling Pieces Of Evidence</text>
<text x="274.500" y="942.600" class="t" textLength="76">For The Dynamo Theory Is The Occurrence Of</text>
<text x="274.500" y="950.500" class="t" textLength="77">Geomagnetic Reversals. Geological Studies Of</text>
<text x="274.500" y="958.400" class="t" textLength="78">Ancient Rocks Have Revealed That The Earth's</text>
<text x="274.500" y="965.900" class="t" textLength="76">Magnetic Field Has Reversed Its Polarity Many</text>
<text x="274.500" y="973.900" class="t" textLength="30">Times In The Past.</text>
<g stroke-width=".6"><ellipse cx="281" cy="996" rx="4" ry="4" fill="#f3f3fd" stroke="#d3d3f3"/><ellipse cx="300" cy="996" rx="6" ry="6" fill="#e2e3fb" stroke="#a9a9ec"/><ellipse cx="321" cy="996" rx="8" ry="8" fill="#c4c5f9" stroke="#7f80e4"/><ellipse cx="347" cy="996" rx="9.500" ry="9.500" fill="#b1b2f8" stroke="#5254d8"/><ellipse cx="347" cy="996" rx="14" ry="3" transform="rotate(30 347 996)" fill="none" stroke="#5254d8"/></g>
<path d="M281,1012v7M300,1012v7M321,1012v7M347,1012v7" stroke="#b0b1ea" stroke-width=".6"/>
<g font-size="3" font-weight="700" text-anchor="middle"><text x="281" y="1024" fill="#c9c9f2">Venus</text><text x="300" y="1024" fill="#a7a8ec">Mars</text><text x="321" y="1024" fill="#7d7fe0">Jupiter</text><text x="347" y="1024" fill="#5052d8">Saturn</text></g>
<text x="274.500" y="1037.100" class="t" textLength="82">This Phenomenon Can Be Explained By Changes</text>
<text x="274.500" y="1045" class="t" textLength="81">In The Convective Patterns And Electric Currents</text>
<text x="274.500" y="1052.900" class="t" textLength="78">Within The Outer Core. As The Fluid Motions In</text>
<text x="274.500" y="1060.900" class="t" textLength="77">The Core Are Complex And Chaotic, They Can</text>
<text x="274.500" y="1068.800" class="t" textLength="69">Lead To Disruptions In The Magnetic Field</text>
<text x="274.500" y="1076.700" class="t" textLength="52">Generation, Causing Reversals.</text>
<rect x="382" y="916" width="66" height="8" fill="url(#pg)"/><text x="384" y="922" class="th">Seismic And Geodetic Data</text>
<text x="382" y="938.700" class="t" textLength="65">Seismic Data Provides Insights Into The</text>
<text x="382" y="946.600" class="t" textLength="77">Structure And Properties Of The Earth's Interior.</text>
<text x="382" y="954.500" class="t" textLength="69">By Analyzing How Seismic Waves Travel</text>
<text x="382" y="962.400" class="t" textLength="74">Through The Core, Scientists Can Determine</text>
<text x="382" y="970.300" class="t" textLength="80">The Physical State (Solid Or Fluid), Composition,</text>
<text x="382" y="978.200" class="t" textLength="65">And Density Of The Materials. Geodetic</text>
<text x="382" y="986.100" class="t" textLength="69">Measurements, Such As Those From Satellite -</text>
<text x="382" y="994" class="t" textLength="80">Based Gravity And Magnetic Field Surveys, Also</text>
<text x="382" y="1001.900" class="t" textLength="78">Contribute To Our Understanding Of The Core -</text>
<text x="382" y="1009.900" class="t" textLength="68">Mantle Dynamics And The Magnetic Field</text>
<text x="382" y="1017.800" class="t" textLength="33">Generation Process.</text>
<text x="154" y="1144" font-size="25" class="ui">3</text>
<g fill="#f0f0f0"><circle cx="451.500" cy="1135" r="2.200"/><circle cx="461" cy="1135" r="2.200"/><circle cx="470" cy="1135" r="2.200"/></g>

<!-- thumbnail 4 -->
<rect x="153" y="1207" width="326" height="230" rx="8" fill="#fff"/>
<rect x="167" y="1221" width="81" height="8" fill="url(#pg)"/><text x="169" y="1227" class="th">Implications And Future Research</text>
<text x="167" y="1242" class="t" textLength="101">The Earth's Magnetic Field Has Far - Reaching Implications. It</text>
<text x="167" y="1249.800" class="t" textLength="93">Affects The Behavior Of Migratory Animals That Use The</text>
<text x="167" y="1257.600" class="t" textLength="106">Magnetic Field For Navigation. It Also Has An Impact On Modern</text>
<text x="167" y="1265.400" class="t" textLength="104">Technological Systems, Such As Satellite Communications And</text>
<text x="167" y="1273.300" class="t" textLength="97">Power Grids, Which Can Be Disrupted During Geomagnetic</text>
<text x="167" y="1281.100" class="t" textLength="12">Storms.</text>
<g transform="translate(0 1100) scale(.3333 .3724)">
<rect x="618" y="542" width="30" height="12" fill="#b4b5f6" stroke="#6466dc"/><rect x="675" y="542" width="30" height="12" fill="#b4b5f6" stroke="#6466dc"/><rect x="656" y="538" width="11" height="20" rx="4" fill="#b4b5f6" stroke="#6466dc"/>
<path d="M650,562L590,610M670,562L735,610" stroke="#6466dc" stroke-width="1.500" fill="none"/>
<ellipse cx="563" cy="625" rx="18" ry="26" fill="#b4b5f6" stroke="#7476e0" transform="rotate(-30 563 625)"/><ellipse cx="758" cy="625" rx="18" ry="26" fill="#b4b5f6" stroke="#7476e0" transform="rotate(30 758 625)"/>
<path d="M548,635L532,665H568ZM772,635L755,665H791Z" fill="#b4b5f6" stroke="#7476e0"/>
<g font-size="8" font-weight="700" fill="#6466d8"><text x="644" y="530">Satellite</text><text x="578" y="580">Up-Link</text><text x="708" y="582">Down-Link</text><text x="572" y="658">Transmitting</text><text x="570" y="670">Earth Station</text><text x="690" y="658">Receiving</text><text x="684" y="670">Earth Station</text></g>
<path d="M1000,623L1205,780L1157,823L948,672Z" fill="#a6a8f7"/>
<path d="M975,648L1181,801M1026,643L974,691M1052,663L1000,711M1078,683L1026,731M1130,723L1078,771M1156,743L1104,791M1182,763L1130,811" stroke="#fff" stroke-width="1.500" fill="none"/>
<path d="M1008,735C985,760 1005,790 1050,785Z" fill="#5558ee"/>
<path d="M1040,735L1105,680L1145,668L1135,705L1070,770C1050,770 1035,755 1040,735Z" fill="#7c7ef5"/>
<path d="M1062,745L1100,715L1115,745L1075,775Z" fill="#5a5cf7"/>
<path d="M1098,680L1145,668L1135,705C1120,700 1105,695 1098,680Z" fill="#a8aaf8"/>
</g>
<text x="167" y="1368.200" class="t" textLength="109">Future Research Could Focus On Improving Our Understanding Of</text>
<text x="167" y="1376" class="t" textLength="109">The Complex Interactions Within The Earth's Core, Especially How</text>
<text x="167" y="1383.900" class="t" textLength="109">Small - Scale Processes Contribute To The Large - Scale Magnetic</text>
<text x="167" y="1391.700" class="t" textLength="104">Field Generation. Additionally, Studying The Magnetic Fields Of</text>
<text x="167" y="1399.500" class="t" textLength="110">Other Planets In The Solar System, Such As Mars And Jupiter, Can</text>
<text x="167" y="1407.700" class="t" textLength="109">Provide Comparative Insights And Help Refine Our Theories About</text>
<text x="167" y="1415.500" class="t" textLength="61">The Earth's Magnetic Field Formation.</text>
<rect x="293.300" y="1221" width="1.300" height="206" fill="#c8c9ea"/>
<rect x="303" y="1221" width="29" height="8" fill="url(#pg)"/><text x="305" y="1227" class="th">Conclusion</text>
<text x="303" y="1240.500" class="t" textLength="81">The Formation Of The Earth's Magnetic Field Is A</text>
<text x="303" y="1248.300" class="t" textLength="90">Complex And Fascinating Process. While The Dynamo</text>
<text x="303" y="1256.100" class="t" textLength="94">Theory Provides A Robust Framework For Understanding</text>
<text x="303" y="1264" class="t" textLength="92">Its Origin, There Are Still Many Aspects That Remain To</text>
<text x="303" y="1271.800" class="t" textLength="91">Be Explored. Continued Research In This Area Will Not</text>
<text x="303" y="1280" class="t" textLength="92">Only Deepen Our Knowledge Of The Earth's Interior But</text>
<text x="303" y="1287.800" class="t" textLength="85">Also Have Important Implications For Various Fields</text>
<text x="303" y="1295.600" class="t" textLength="80">From Protecting Life On Earth To Advancing Our</text>
<text x="303" y="1303.400" class="t" textLength="52">Understanding Of The Universe.</text>
<text x="154" y="1478" font-size="25" class="ui">4</text>
<g fill="#f0f0f0"><circle cx="451.500" cy="1469" r="2.200"/><circle cx="461" cy="1469" r="2.200"/><circle cx="470" cy="1469" r="2.200"/></g>

<!-- thumbnail 5 -->
<rect x="153" y="1541" width="326" height="160" rx="8" fill="#fff"/>
<text x="167" y="1565.500" class="ser" font-size="11.500" font-weight="700" fill="#5658dc" textLength="157">Satellite Communications And</text>
<text x="328" y="1565.500" class="ser" font-size="11.500" font-style="italic" fill="#5c5edf" textLength="59">Power Grids</text>
<rect x="166" y="1579" width="81" height="21" fill="url(#pg)"/><rect x="247.500" y="1579" width="108.500" height="21" fill="url(#pg)"/><rect x="356.500" y="1579" width="110.500" height="21" fill="url(#pg)"/>
<path d="M166,1600V1684M247,1600V1684M356,1600V1684M467,1600V1684M166,1636H467M166,1672H467" stroke="#dcdcf0" stroke-width=".7" fill="none"/>
<g text-anchor="middle">
<text x="207" y="1591.500" class="th">Comparison Dimensions</text><text x="302" y="1591.500" class="th">Satellite Communications</text><text x="411" y="1591.500" class="th">Power Grid</text>
<text x="207" y="1620.500" class="tb">Global Coverage(As Of 2024)</text>
<text x="302" y="1613.500" class="t">Cover More Than 70% Of The Earth's Surface</text><text x="302" y="1620" class="t">Approximately. The Coverage Rate In Oceans</text><text x="302" y="1626.500" class="t">And Remote Areas Is Continuously Increasing.</text>
<text x="411" y="1613.500" class="t">About 85% Of The Global Population Is Covered</text><text x="411" y="1620" class="t">By Power Grids. Some Remote Areas Are Still</text><text x="411" y="1626.500" class="t">Not Connected.</text>
<text x="207" y="1656.500" class="tb">Main Interfering Factors</text>
<text x="302" y="1646.500" class="t">Solar Storms, Space Debris, And Severe</text><text x="302" y="1653" class="t">Weather (Such As Rainstorms And Dust</text><text x="302" y="1659.500" class="t">Storms) Can Lead To A Signal Interruption Rate</text><text x="302" y="1666" class="t">Of About 5%-10%.</text>
<text x="411" y="1646.500" class="t">Natural Disasters (Such As Earthquakes,</text><text x="411" y="1653" class="t">Floods, Etc.) And Equipment Aging Lead To</text><text x="411" y="1659.500" class="t">About 3%-5% Of Transmission Line Failures</text><text x="411" y="1666" class="t">Annually.</text>
<text x="302" y="1683" class="t">Low Earth Orbit Satellite Communication</text>
<text x="411" y="1678" class="t">The Data Transmission Rate Of Smart Grids</text><text x="411" y="1683.500" class="t">Varies Depending On The Scenario. In The</text>
</g>

<!-- bottom bar -->
<path d="M1975,1684V1619a14,14 0 0 1 14,-14H2839a14,14 0 0 1 14,14V1684Z" fill="#353537" stroke="#3f3f41" stroke-width="2"/>
<ellipse cx="2007" cy="1645" rx="16" ry="16" fill="#5a5a5c"/>
<path class="s" stroke-width="2" d="M2004,1637L2011,1645L2004,1653"/>
<g class="s">
<rect x="2052" y="1630" width="37" height="31" rx="7"/>
<path d="M2070.500,1630V1661M2057,1638H2066M2075,1638H2085M2057,1646H2066M2075,1646H2085M2057,1654H2060M2075,1654H2079"/>
<path d="M2142,1655H2138a6,6 0 0 1 -6,-6V1635a6,6 0 0 1 6,-6H2163a6,6 0 0 1 6,6V1649a6,6 0 0 1 -6,6H2158M2150.500,1654L2156,1662H2145Z"/>
<path d="M2434,1642L2445,1652L2456,1642M2643,1644H2665M2722,1644H2745M2733.500,1633V1655"/>
<rect x="2798" y="1630" width="34" height="31" rx="6"/>
</g>
<path d="M2354,1647L2365,1637L2376,1647" fill="none" stroke="#666" stroke-width="2.400"/>
<rect x="2199.500" y="1633" width="1.500" height="24" fill="#4d4d4f"/><rect x="2493.500" y="1633" width="1.500" height="24" fill="#4d4d4f"/>
<rect x="2218" y="1618" width="49" height="54" rx="14" fill="#232325" stroke="#414143" stroke-width="2"/>
<text x="2243" y="1655" font-size="24" class="ui" text-anchor="middle">1</text>
<text x="2278" y="1655" font-size="24" fill="#666" textLength="40">/ 29</text>
<rect x="2512" y="1618" width="93" height="54" rx="14" fill="#232325" stroke="#414143" stroke-width="2"/>
<text x="2532" y="1655" font-size="24" class="ui" textLength="54">100%</text>
<text x="2815" y="1651" font-size="15" fill="#fff" text-anchor="middle">1:1</text>
</svg>
</body></html>
